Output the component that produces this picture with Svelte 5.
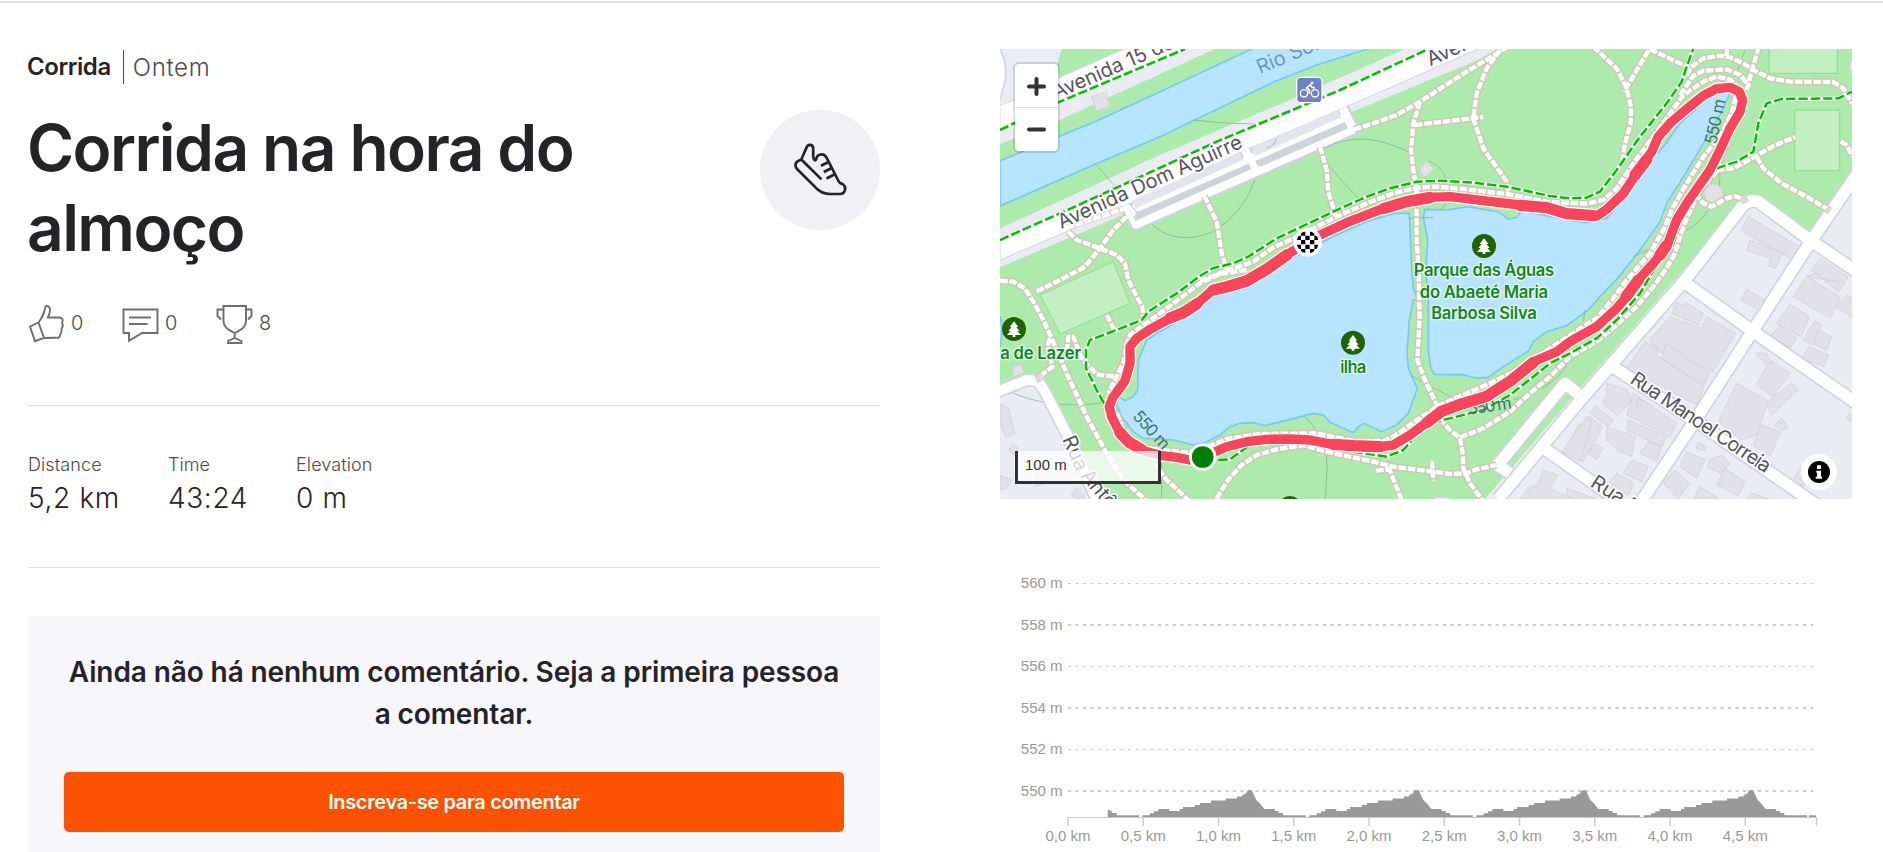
<script>
  const footpaths = [
    'M740 690L660 702L600 730L540 775L480 820L430 855L390 885L380 912L370 970L350 1010L325 1060',
    'M600 722L680 692L760 665L820 622L900 588L940 565L1010 530L1100 490L1180 460L1250 443L1310 440L1400 448L1520 462L1640 485L1760 491L1810 480L1850 445L1900 370L1960 290L2010 220L2050 165L2110 125L2150 110L2190 118L2210 138',
    'M2040 165L2080 108L2110 92L2180 88L2220 105L2250 140',
    'M2060 105L2078 78L2110 55L2160 47L2190 52L2230 70L2260 90L2310 115L2370 125L2500 126L2530 145L2556 190',
    'M1950 27L2060 80', 'M1945 32L1872 155', 'M1780 20L1850 85L1880 145L1893 200L1892 250L1875 310L1867 360',
    'M2276 20L2255 95L2240 150', 'M2180 48V20',
    'M350 1120L380 1195L410 1218L470 1228L560 1238L620 1222L680 1197L780 1182L950 1180L1060 1203L1150 1203L1180 1190L1250 1140L1320 1095L1400 1060L1470 1030L1560 985L1650 925L1750 860L1790 835L1840 775L1880 720L1950 640L1990 570L2020 500L2060 430L2110 350L2160 290L2195 220L2208 165',
    'M650 1375L685 1318L725 1275L770 1245L830 1228L910 1216L1000 1240L1120 1265L1180 1280L1300 1295L1350 1302L1400 1300L1430 1288L1490 1275',
    'M1165 1280L1205 1380', 'M1128 1292L1170 1288', 'M1296 1263L1300 1322',
    'M1320 1135L1345 1165L1380 1195L1388 1240L1390 1285L1410 1330L1447 1380',
    'M1380 1192L1450 1165L1530 1115L1590 1060L1650 1010L1710 950L1790 905L1850 855L1910 800L1960 740L2000 685L2025 640L2050 560L2085 480L2100 450L2150 395L2165 345L2200 260L2240 170',
    'M1250 450V600L1256 700L1259 830L1252 960L1275 1020L1310 1095L1322 1140',
    'M1062 268L1120 250L1190 225L1260 185L1400 95L1525 20', 'M1260 185L1240 250L1233 330L1240 390L1250 445', 'M1245 255L1450 231',
    'M1500 30L1460 85L1430 160L1420 235L1450 325L1520 425L1525 458',
    'M960 320L980 390L985 455L1008 530', 'M613 468L650 545L665 640L680 690',
    'M205 575L230 600L300 625L350 645L375 670L385 720L405 760L427 800L430 835',
    'M380 530L340 570L300 625L255 680L180 720L105 757',
    'M0 722L40 725L75 745L100 785L130 840L155 895L200 1000L260 1130L320 1240L370 1320L437 1380',
    'M320 825L345 872', 'M150 895L142 920L158 980L110 1015', 'M200 935L205 890L220 890L245 955L290 1003L345 1010',
    'M460 1265L500 1320L565 1380', 'M2150 390L2200 385L2265 350L2320 318L2385 291',
    'M2270 350L2290 385L2345 430L2420 470L2490 512', 'M2522 304L2540 315L2558 350',
    'M2085 460L2110 490L2135 500L2180 475L2205 468L2235 480'
  ];
  const cycleways = [
    'M0 270L180 185L555 27', 'M0 600L180 520L400 420L650 305L870 213L1020 150L1285 27',
    'M312 1090L290 1050L258 985L258 930L270 900L350 870L425 840L445 815L530 760L600 708L640 684L700 670L745 650L830 595L900 562L1000 515L1100 470L1170 445L1250 425L1320 422L1420 428L1520 440L1650 468L1710 475L1760 473L1800 455L1850 390L1920 290L2000 190L2045 125L2060 80L2082 20',
    'M2150 385L2210 365L2260 335L2275 250L2300 190L2345 177L2515 175L2556 155',
    'M2040 555L2020 612L1955 700L1920 760L1850 840L1790 895L1710 940L1650 970L1600 1010L1530 1065L1450 1110L1310 1145',
    'M1060 1235L1160 1250L1210 1230L1232 1205L1228 1190', 'M655 1260L690 1258L745 1218'
  ];
  const streets = [
    'M1495 1377L1750 1070L2055 720L2230 495Q2248 478 2275 485L2430 600L2570 695',
    'M2580 390L2435 600L2260 870L2080 1150L1920 1390', 'M2050 725L2260 875L2570 1090',
    'M1838 980L2090 1145L2450 1395', 'M1622 1218L1770 1322L1860 1385',
    'M1530 1300L1493 1275L1695 1030L1745 1070'
  ];
  const buildings = [
    '275,170 318,155 330,200 290,213', '1278,362 1258,390 1275,412 1303,388',
    '2245,530 2398,620 2375,657 2222,572', '2250,600 2347,638 2328,685 2307,678 2313,657 2240,632',
    '2460,655 2545,712 2515,745 2434,690', '2420,710 2535,728 2515,755 2448,700',
    '2240,748 2294,778 2280,814 2223,780', '2420,708 2520,772 2490,835 2380,770', '2540,765 2570,785 2555,830 2506,800',
    '2370,793 2428,830 2402,890 2330,850', '2340,858 2390,895 2370,925 2312,885', '2445,843 2465,855 2440,916 2408,900', '2455,870 2495,890 2480,930 2440,912', '2425,920 2485,945 2472,980 2408,957',
    '2030,787 2045,795 2060,790 2110,820 2095,855 2050,835 2015,820',
    '2010,830 2090,860 2105,865 2120,830 2207,880 2138,996 2075,965 2068,980 1990,940 1965,930 1950,898',
    '2000,910 2128,1000 2112,1035 1985,955', '1935,905 1975,925 1970,945 2105,1035 2112,1040 2090,1095 1880,985',
    '2310,960 2370,1000 2320,1070 2268,1035', '2210,1030 2305,1082 2270,1185 2225,1200 2155,1145', '2375,1028 2395,1050 2315,1125 2297,1090', '2285,1155 2342,1175 2310,1248 2260,1215', '2345,1135 2365,1160 2350,1172 2325,1155', '2268,940 2298,940 2315,965 2300,975',
    '1820,1030 1880,1048 1895,1078 1870,1110 1850,1125 1808,1090 1820,1060', '1900,1060 2030,1150 2010,1190 1880,1125', '1915,1075 1928,1082 1920,1103 1908,1098',
    '1770,1130 1808,1160 1750,1265 1700,1230 1730,1160', '1785,1098 1840,1140 1825,1160 1770,1120', '1820,1160 1905,1188 1895,1250 1850,1230 1820,1200', '1885,1140 2000,1190 1985,1220 1880,1170', '1945,1205 1985,1220 1970,1265 1920,1240', '1785,1210 1810,1225 1788,1260 1767,1240', '1895,1260 1945,1280 1925,1325 1870,1300', '1850,1300 1903,1330 1885,1365 1820,1340',
    '2060,1235 2115,1260 2090,1315 2040,1280', '2130,1260 2165,1245 2190,1270 2160,1300 2120,1280', '2095,1208 2120,1218 2115,1232 2088,1225', '2175,1285 2235,1325 2215,1370 2150,1335', '2025,1290 2068,1330 2035,1377 1990,1330', '2100,1340 2155,1375 2080,1377', '2400,1280 2440,1300 2410,1340 2380,1320', '2545,1120 2560,1125 2550,1145 2540,1138', '2255,1360 2310,1377 2240,1377', '1700,1345 1790,1377 1700,1377',
    '1760,1130 1775,1145 1740,1265 1685,1235', '1630,1290 1675,1305 1650,1345 1720,1377 1560,1377 1590,1340 1612,1335',
    '40,980 65,972 72,1000 38,1010', '0,1090 25,1105 45,1180 18,1193 0,1150', '40,1213 55,1225 40,1245 25,1230', '0,1305 35,1320 20,1345 0,1350', '230,1343 255,1370 240,1380 213,1365', '110,1295 180,1310 170,1325 105,1338', '1305,1370 1350,1370 1350,1380 1305,1380',
    '2548,65 2560,65 2560,92 2548,92'
  ];
  const contours = [
    'M290 375L345 440M385 488L412 518', 'M455 553Q530 620 640 575Q730 520 765 420', 'M580 240Q670 252 765 252', 'M828 295Q828 315 800 325',
    'M975 325Q1080 265 1225 335M1285 362Q1335 385 1337 420', 'M980 368Q1020 420 1075 475', 'M1340 480Q1335 500 1320 512M1225 535L1300 532',
    'M30 1055Q150 1110 310 1088M485 1270V1377', 'M915 1128Q990 1210 980 1300L976 1377', 'M1235 1008L1365 1078M1700 980Q1650 1050 1540 1080',
    'M2160 400L2158 440M2125 510Q2100 550 2060 570M1965 620L1900 650', 'M1755 810L1750 845M2235 30L2205 110'
  ];
  const route = 'M608 1252L570 1260L530 1252L480 1246L430 1232L385 1206L360 1180L335 1130L328 1100L337 1075L375 1022L390 970L390 920L410 895L450 868L510 835L560 810L600 783L640 748L680 738L740 720L800 684L870 638L960 585L1040 548L1150 505L1220 483L1280 472L1350 470L1450 482L1560 495L1630 502L1700 520L1790 528L1820 508L1870 460L1910 400L1955 335L1975 290L2010 250L2060 207L2110 167L2150 146L2190 142L2218 155L2228 180L2220 215L2190 265L2160 330L2130 390L2095 440L2060 490L2030 540L2015 580L2000 620L1960 670L1910 725L1880 770L1850 805L1790 860L1710 905L1670 935L1600 965L1530 1025L1460 1070L1370 1095L1320 1115L1270 1155L1230 1185L1180 1215L1120 1223L1000 1214L930 1200L870 1197L800 1198L740 1205L680 1220Z';
  // Stretches where the laps drift apart and the drawn line gets wider.
  const spread = 'M510 834L550 818L590 792M640 750L680 741L740 723L800 688L862 644M1150 506L1220 485L1290 473M1560 496L1640 503L1700 521L1780 527M1905 405L1940 359M1280 1148L1325 1114L1375 1095L1460 1069L1530 1024L1600 967M1000 1213L1060 1217L1140 1220M360 1178L386 1206L425 1229M1998 618L1980 645M1915 720L1878 770';

  const yTicks = [560, 558, 556, 554, 552, 550].map((v, i) => ({ v, y: 583 + i * 41.5, thick: i % 2 }));
  const xTicks = ['0,0', '0,5', '1,0', '1,5', '2,0', '2,5', '3,0', '3,5', '4,0', '4,5'].map((v, i) => ({ v, x: 1068 + i * 75.25 }));
  const lap = [[427, 765], [449, 765], [449, 759], [462, 759], [462, 753], [475, 753], [475, 746], [508, 746], [508, 752], [539, 752], [539, 746], [549, 746], [549, 740], [584, 740], [584, 734], [600, 734], [600, 728], [633, 728], [633, 721], [677, 721], [677, 715], [711, 715], [711, 709], [727, 709], [727, 704], [738, 700], [743, 690], [755, 690], [769, 719], [780, 730], [793, 746], [824, 746], [824, 752], [836, 752], [836, 758], [849, 758], [849, 765], [917, 765]];
  const shape = (pts, dx = 0) => {
    const p = pts.map(([x, y]) => `${(1000 + (x + dx) / 3).toFixed(1)},${(560.3 + y / 3).toFixed(1)}`);
    const [a, b] = [pts[0][0], pts[pts.length - 1][0]].map((x) => (1000 + (x + dx) / 3).toFixed(1));
    return `${a},817 ${p.join(' ')} ${b},817`;
  };
  const areas = [
    shape([[323, 748], [335, 752], [335, 758], [350, 758], [350, 765], [417, 765]]),
    ...[0, 501, 1002, 1504].map((d) => shape(lap, d)),
    shape([[2427, 765], [2448, 765]])
  ];
</script>

{#snippet tree(x, y)}
  <g transform="translate({x} {y})">
    <circle r="36" fill="#1f6400" />
    <path d="M0-23L13-6H7L17 6H10L21 18H4V24H-4V18H-21L-10 6H-17L-7-6H-13Z" fill="#fff" />
  </g>
{/snippet}

<div class="page">
  <main>
    <section class="summary">
      <div class="kind"><strong>Corrida</strong><span>Ontem</span></div>
      <header>
        <h1>Corrida na hora do almoço</h1>
        <div class="badge">
          <svg width="54" height="54" viewBox="0 0 54 54" fill="none" stroke="#242428" stroke-width="2.7" stroke-linejoin="round">
            <path d="M8.3 16.5L13 5.8C15-.3 20.3 1.5 20.2 6V13C20.2 17.5 22.7 18.3 23.2 16C24 10.8 30.5 9.7 33.3 14.2L45.5 38C46.5 40.3 47.5 40.2 49.5 41C54.5 44.5 51.5 51 47.3 51H37C31.7 50.9 27.7 49.3 23.5 45.4L4.3 26.3C1 22.7 2 18.4 8.3 16.5ZM8.3 16.5L28.5 36.4" />
            <path d="M28 22.7L35 19.2M30.8 29L38.3 25.3M33.5 35.5L42.3 31" />
          </svg>
        </div>
      </header>
      <div class="counts">
        <div><svg width="38" height="38" viewBox="0 0 38 38"><path d="M2 22.5L10.5 18.5L16 34L7 37.2ZM10.5 18.5C15 13 16 9 17.7 2.2C22 1 23.5 5.5 20 13.5H31.5C35 14 35.5 16.8 34 19C35.5 21 34.5 23.5 33.5 25C34.5 28 32.5 29 32.2 30.5C32 33.5 30.5 34.2 27.5 33.7L16 34" /></svg>0</div>
        <div><svg width="38" height="38" viewBox="0 0 38 38"><path d="M1.5 5.5H35.5V29H20L7 36.8V29H1.5ZM7 13.5H29M7 20H25.5" /></svg>0</div>
        <div><svg width="38" height="38" viewBox="0 0 38 38"><path d="M7.5 2H30V17C30 24 24 26 18.7 29.2C13.5 26 7.5 24 7.5 17ZM7.5 5.5H1.5V12L5 15.5M30 5.5H35.5V12L32 15.5M18.7 29.2V35M12 39V37L18.7 34L25.5 37V39Z" /></svg>8</div>
      </div>
      <div class="stats">
        <div><small>Distance</small><b>5,2 km</b></div>
        <div><small>Time</small><b>43:24</b></div>
        <div><small>Elevation</small><b>0 m</b></div>
      </div>
      <div class="comments">
        <p>Ainda não há nenhum comentário. Seja a primeira pessoa<br />a comentar.</p>
        <button>Inscreva-se para comentar</button>
      </div>
    </section>

    <section class="visuals">
      <div class="map">
        <svg width="852" height="450" viewBox="0 27 2556 1350">
          <rect y="27" width="2556" height="1350" fill="#adebad" />
          <path d="M0 20H188L168 80L180 115L430 20H660L330 170L180 240L0 312Z" fill="#ebebf4" />
          <path d="M0 27Q22 70 16 120L0 180" fill="#fff" stroke="#d0d3e0" stroke-width="5" />
          <path d="M0 195L45 180L180 112L390 20H575L180 185L0 266Z" fill="#fff" stroke="#d9d9e4" stroke-width="3" />
          <path d="M0 362L290 243L480 155L770 20H1125L950 75L830 122L720 175L480 290L280 375L0 498Z" fill="#b7e5ff" stroke="#75c7ff" stroke-width="5" />
          <path d="M0 565L240 455L480 345L870 180L1230 20H1530L1050 218L380 520L0 682Z" fill="#ebebf4" />
          <path d="M0 602L180 522L650 307L870 215L1285 27L1450 20L1040 200L720 338L380 498L0 660Z" fill="#fff" stroke="#d0d3e0" stroke-width="3" />
          <g fill="none" stroke-linejoin="round">
            <path d="M378 495L406 553L1060 268L1028 205M395 520L1045 232M735 330L765 390" stroke="#cfd3de" stroke-width="40" />
            <path d="M400 530L1045 245" stroke="#cdd5db" stroke-width="26" />
            <path d="M378 495L408 553L1060 268L1028 205M395 510L1045 228M735 330L765 390" stroke="#fff" stroke-width="25" />
            <path d="M403 536L750 378M778 373L1040 258" stroke="#cdd5db" stroke-width="16" />
            <path d="M400 494L725 348M760 337L1018 221" stroke="#e2e4ee" stroke-width="25" />
          </g>
          <path d="M2570 370L2430 575L2285 467Q2250 455 2228 475L2050 690L1740 1045L1455 1377H2556Z" fill="#ebebf4" />
          <path d="M0 1060L90 1030L125 1020L200 1180L290 1377H0Z" fill="#ebebf4" />
          <g fill="#c4efc2" stroke="#91e293" stroke-width="4">
            <path d="M2307 20H2512V100H2307ZM2384 210H2519V392H2384ZM120 765L340 665L390 790L180 882Z" />
          </g>
          <g fill="#b7e5ff" stroke="#75c7ff" stroke-width="5">
            <path d="M480 875L440 900L415 960L413 1050L400 1070L375 1082L352 1068L350 1095L365 1130L400 1175L430 1195L520 1200L580 1215L615 1208L660 1185L690 1160L720 1150L760 1148L795 1157L870 1138L940 1120L970 1125L990 1147L1060 1178L1075 1160L1093 1150L1145 1175L1190 1155L1225 1120L1252 1045L1225 985L1221 935L1228 840L1240 780L1252 778L1240 745L1235 690L1228 520L1180 520L1100 545L1010 585L870 655L730 745L640 770L585 815L530 845Z" />
            <path d="M1275 508L1270 530L1283 600L1277 690L1285 765V930L1292 985L1303 1003L1390 1004L1425 1014L1465 1012L1510 980L1585 933L1600 905L1640 875L1700 857L1765 810L1800 770L1850 718L1920 630L1980 545L2000 490L2060 395L2110 310L2160 225L2195 150L2150 145L2085 210L2040 250L1990 320L1940 375L1900 440L1860 490L1820 535L1760 549L1700 538L1565 512L1550 532L1525 538L1495 515L1450 508L1405 500L1340 510Z" />
            <path d="M0 830Q12 870 0 920" />
          </g>
          <path d={contours.join('')} fill="none" stroke="#6fae8c" stroke-opacity=".65" stroke-width="3" />
          <g fill="none" stroke-linejoin="round">
            <path d="M-10 1056L80 1020L112 1022L132 1050L215 1210L290 1380" stroke="#d0d3e0" stroke-width="40" />
            <path d="M-10 1056L80 1020L112 1022L132 1050L215 1210L290 1380" stroke="#fff" stroke-width="30" />
            <path d={streets.join('')} stroke="#d0d3e0" stroke-width="44" />
            <path d={streets.join('')} stroke="#fff" stroke-width="34" />
          </g>
          <g fill="#e1e1e7" stroke="#c9c3c3" stroke-width="2.5" stroke-dasharray="4 3">
            {#each buildings as points}<polygon {points} />{/each}
            <circle cx="2140" cy="460" r="28" />
          </g>
          <g fill="none" stroke-linejoin="round">
            <path d={footpaths.join('')} stroke="#c9cbb4" stroke-width="22" />
            <path d={footpaths.join('')} stroke="#fff" stroke-width="13" stroke-dasharray="23 5" />
            <path d="M108 1020L130 1008M2490 512L2480 504M2228 470L2238 488" stroke="#e8d4d4" stroke-width="22" />
            <path d="M200 563L370 507" stroke="#e8d4d4" stroke-width="20" />
            <path d="M200 563L370 507" stroke="#fff" stroke-width="13" stroke-dasharray="23 5" />
            <path d={cycleways.join('')} stroke="#e8e4e4" stroke-width="13" />
            <path d={cycleways.join('')} stroke="#fff" stroke-width="10" />
            <path d={cycleways.join('')} stroke="#00be00" stroke-width="7.5" stroke-dasharray="28 9" />
          </g>
          <g class="street">
            <text transform="translate(184 567) rotate(-24.2)" textLength="600">Avenida Dom Aguirre</text>
            <text transform="translate(168 178) rotate(-23.5)">Avenida 15 de Agosto</text>
            <text transform="translate(1291 79) rotate(-24)">Avenida</text>
            <text transform="translate(1887 1027) rotate(33.8)" textLength="492">Rua Manoel Correia</text>
            <text transform="translate(1768 1337) rotate(33)">Rua Brasil</text>
            <text transform="translate(186 1198) rotate(66)">Rua</text>
            <text transform="translate(240 1309) rotate(50)">Antônio</text>
          </g>
          <text class="river" transform="translate(780 103) rotate(-23)">Rio Sorocaba</text>
          <g class="height">
            <text transform="translate(2148 316) rotate(-78)" textLength="138">550 m</text>
            <text transform="translate(395 1131) rotate(47)" textLength="138">550 m</text>
            <text transform="translate(1406 1124) rotate(-8)" textLength="132">550 m</text>
          </g>
          <g fill="none" stroke-linejoin="round" stroke-linecap="round">
            <path d={route} stroke="#fff" stroke-width="35" />
            <path d={spread} stroke="#fff" stroke-width="41" />
            <path d={route} stroke="#f9455c" stroke-width="28" />
            <path d={spread} stroke="#f9455c" stroke-width="34" />
          </g>
          <g class="park">
            <text x="1452" y="709" textLength="421">Parque das Águas</text>
            <text x="1452" y="773" textLength="385">do Abaeté Maria</text>
            <text x="1452" y="838" textLength="317">Barbosa Silva</text>
            <text x="1060" y="1000" textLength="78">ilha</text>
            <text x="122" y="958" textLength="242">a de Lazer</text>
          </g>
          {@render tree(1452, 618)}{@render tree(1059, 908)}{@render tree(42, 867)}{@render tree(870, 1404)}
          <g transform="translate(928 150)" fill="none" stroke="#fff" stroke-width="4">
            <rect x="-38" y="-38" width="76" height="76" rx="12" fill="#7080c2" />
            <circle cx="-16" cy="10" r="11" /><circle cx="17" cy="10" r="11" />
            <path d="M0 12V0L-8-6L3-16L9-7H17" stroke-width="5" /><circle cx="8" cy="-21" r="3" fill="#fff" stroke-width="3" />
          </g>
          <circle cx="608" cy="1251" r="37" fill="#008000" stroke="#fff" stroke-width="9" />
          <g transform="translate(923 607)">
            <circle r="43" fill="#fff" />
            <clipPath id="flag"><circle r="33" /></clipPath>
            <path clip-path="url(#flag)" d="M-20-33h13v13h-13zM7-33h13v13H7zM-33-20h13v13h-13zM-7-20h13v13H-7zM20-20h13v13H20zM-20-7h13v13h-13zM7-7h13v13H7zM-33 7h13v13h-13zM-7 7h13v13H-7zM20 7h13v13H20zM-20 20h13v13h-13zM7 20h13v13H7z" />
          </g>
          <circle cx="2457" cy="1296" r="54" fill="#fff" />
          <circle cx="2457" cy="1296" r="33" />
          <path d="M2451 1276h12v11h-12zM2449 1292h14v18h3v6h-19v-6h4v-12h-2z" fill="#fff" />
        </svg>
        <div class="zoom">
          <svg viewBox="0 0 43 43"><path d="M14 22.5H29M21.5 15V30" /></svg>
          <svg viewBox="0 0 43 43"><path d="M14 21.5H29" /></svg>
        </div>
        <div class="scale">100 m</div>
      </div>

      <svg class="chart" width="852" height="292" viewBox="1000 560 852 292">
        {#each yTicks as t}
          <text x="1062.5" y={t.y + 5} text-anchor="end">{t.v} m</text>
          <path d="M1068 {t.thick ? Math.floor(t.y) + 1 : t.y + 0.5}H1813" stroke="#ccc" stroke-width={t.thick ? 2 : 1} stroke-dasharray="3 4.5" />
        {/each}
        {#each areas as points}<polygon {points} fill="#999" />{/each}
        <path d="M1068 817.5H1817" stroke="#ccc" />
        {#each xTicks as t}
          <path d="M{t.x} 817V826" stroke="#ccc" stroke-width="1.5" />
          <text x={t.x} y="841" text-anchor="middle">{t.v} km</text>
        {/each}
        <path d="M1816.5 817V826" stroke="#ccc" stroke-width="1.5" />
      </svg>
    </section>
  </main>
</div>

<style>
  :global(body) { margin: 0; background: #fff; overflow: hidden; }
  .page { box-sizing: border-box; height: 852px; overflow: hidden; padding-top: 1px; font-family: Inter, "Liberation Sans", sans-serif; color: #242428; }
  main { display: grid; grid-template-columns: 852px 852px; gap: 120px; padding: 46px 0 0 28px; border-top: 2px solid #dcdfdd; }
  .summary { display: flex; flex-direction: column; }
  .kind { display: flex; align-items: center; height: 34px; margin-top: 1px; font-size: 24px; }
  .kind strong { margin-left: -1px; font-weight: 600; letter-spacing: -0.45px; padding-right: 12px; border-right: 1px solid #494950; line-height: 34px; }
  .kind span { font-weight: 350; color: #494950; padding-left: 9px; letter-spacing: 0.7px; }
  header { display: flex; justify-content: space-between; margin-top: 24px; }
  h1 { margin: 0 0 0 -1px; width: 620px; font-size: 64px; line-height: 80px; font-weight: 600; letter-spacing: -1.58px; }
  .badge { display: grid; place-items: center; width: 120px; height: 120px; margin-top: 2px; border-radius: 50%; background: #f0f0f5; }
  .counts { display: flex; gap: 38px; height: 38px; margin-top: 36px; font-size: 20px; font-weight: 350; color: #494950; }
  .counts div { display: flex; align-items: center; gap: 5px; width: 56px; }
  .counts svg { flex: none; fill: none; stroke: #6d6d78; stroke-width: 1.9; overflow: visible; }
  .stats { display: flex; height: 161px; margin-top: 63px; border: solid #dfdfe6; border-width: 1px 0; }
  .stats div { display: flex; flex-direction: column; margin-right: 48px; padding-top: 47px; }
  .stats small { font-size: 18px; line-height: 24px; font-weight: 300; color: #494950; letter-spacing: 0.1px; }
  .stats b { font-size: 28px; line-height: 42px; font-weight: 350; letter-spacing: 0.65px; }
  .comments { box-sizing: border-box; height: 260px; margin-top: 48px; padding: 35px 36px; background: #f7f7fa; }
  p { margin: 0; text-align: center; white-space: nowrap; font-size: 28px; line-height: 42px; font-weight: 600; letter-spacing: -0.1px; }
  button { display: block; width: 780px; height: 60px; margin-top: 37px; border: 0; border-radius: 5px; background: #fc5200; color: #fff; font: 600 20px Inter, sans-serif; letter-spacing: -0.35px; }
  .visuals { display: flex; flex-direction: column; gap: 61px; }
  .map { position: relative; height: 450px; overflow: hidden; }
  .map > svg, .chart { display: block; }
  .street text { font: 60px Inter, sans-serif; fill: #55555c; stroke: #fff; stroke-width: 9; stroke-linejoin: round; paint-order: stroke; }
  .river { font: 60px Inter, sans-serif; fill: #5c96dc; stroke: #c9e9fb; stroke-width: 5; paint-order: stroke; }
  .height text { font: 50px Inter, sans-serif; fill: #42756a; }
  .park text { font: 600 50px Inter, sans-serif; text-anchor: middle; fill: #11871f; stroke: #e6f7ee; stroke-width: 8; stroke-linejoin: round; paint-order: stroke; }
  .zoom { position: absolute; left: 13px; top: 13px; width: 43px; border: 2px solid rgba(0, 0, 0, 0.12); border-radius: 6px; background: #fff; background-clip: padding-box; }
  .zoom svg { display: block; width: 43px; height: 43px; fill: none; stroke: #333; stroke-width: 4; stroke-linecap: round; }
  .zoom svg + svg { border-top: 1px solid #ddd; }
  .scale { position: absolute; box-sizing: border-box; left: 15px; top: 402px; width: 146px; height: 33px; padding-left: 7px; border: 3px solid #333; border-top: 0; background: rgba(255, 255, 255, 0.75); color: #333; font: 15px/28px "Liberation Sans", sans-serif; }
  .chart text { font: 15px "Liberation Sans", Arial, sans-serif; fill: #999; }
</style>
